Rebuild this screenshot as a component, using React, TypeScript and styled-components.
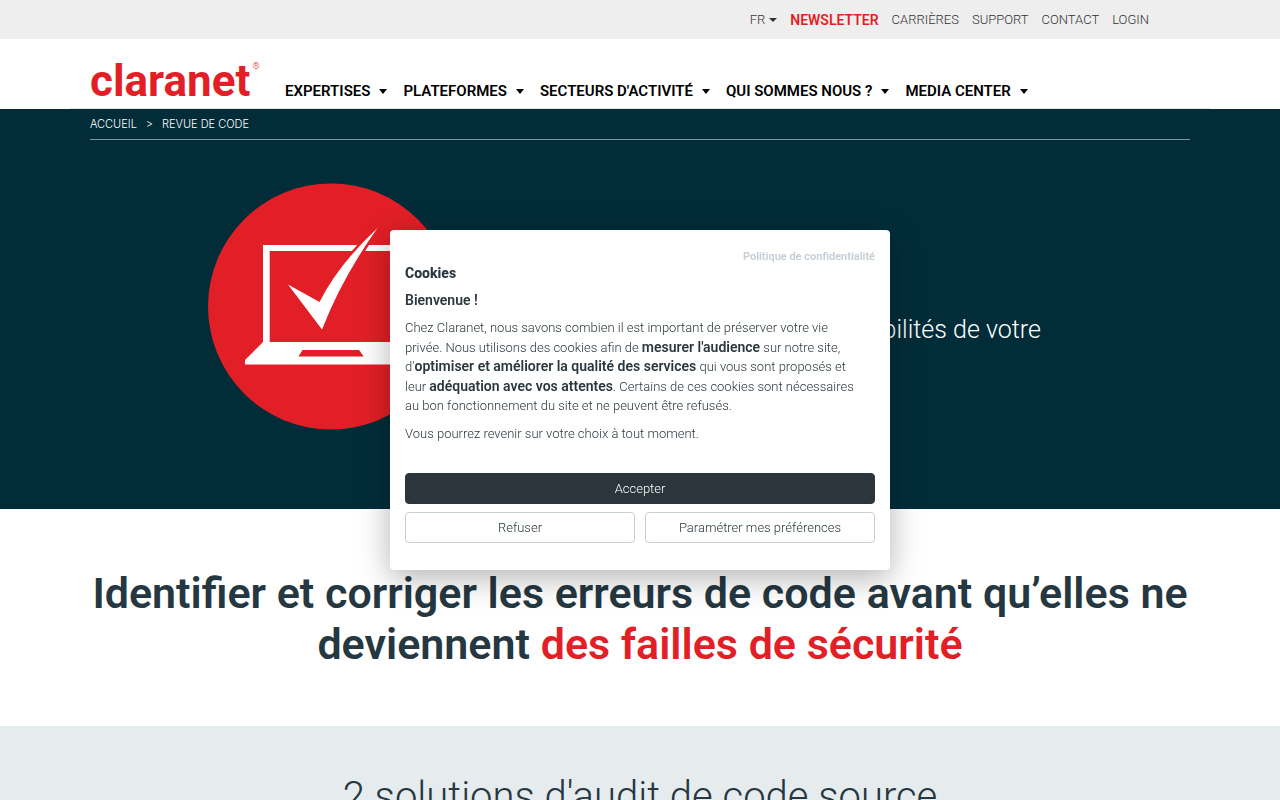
import React from "react";
import styled, { createGlobalStyle } from "styled-components";

const ink = "#253741";
const red = "#e21f26";
const night = "#022d38";

const GlobalStyle = createGlobalStyle`
  *, *::before, *::after { box-sizing: border-box; }
  body {
    margin: 0;
    background: #fff;
    color: ${ink};
    font-family: Roboto, "Liberation Sans", sans-serif;
    font-weight: 300;
  }
  h1, h2, p, ul, ol { margin: 0; padding: 0; }
  ul, ol { list-style: none; }
  a { color: inherit; text-decoration: none; }
`;

const Page = styled.div`
  height: 100vh;
  overflow: hidden;
`;

const Container = styled.div`
  width: 100%;
  max-width: 1100px;
  margin: 0 auto;
`;

const TopBar = styled.div`
  background: #eee;
`;

const TopNav = styled(Container)`
  display: flex;
  justify-content: flex-end;
  padding-right: 41px;
`;

const TopLinks = styled.ul`
  display: flex;
  gap: 13px;
  height: 39px;
  align-items: center;
  font-size: 13px;
  line-height: 20px;
  color: #333;
`;

const TopLink = styled.a<{ $highlight?: boolean }>`
  display: flex;
  align-items: center;
  gap: 4px;
  ${(p) => p.$highlight && `color: ${red}; font-weight: 600; font-size: 14px;`}
`;

const Caret = styled.span`
  border: 4px solid transparent;
  border-top-color: currentColor;
  border-bottom: 0;
`;

const MenuCaret = styled(Caret)`
  border-top-width: 5px;
`;

const HeaderRow = styled.header`
  display: flex;
  align-items: flex-end;
  gap: 26px;
  width: 100%;
  max-width: 1140px;
  height: 70px;
  margin: 0 auto;
  padding: 0 20px;
  border-bottom: 1px solid #dfe6e8;
`;

const Logo = styled.a`
  display: flex;
  align-items: flex-start;
  gap: 2px;
  width: 169px;
  height: 52px;
  color: ${red};
  font-size: 44px;
  font-weight: 700;
  line-height: 50px;
`;

const Registered = styled.sup`
  margin-top: 4px;
  font-size: 9px;
  font-weight: 300;
  line-height: 12px;
`;

const MainNav = styled.ul`
  display: flex;
  gap: 16px;
  padding-bottom: 7px;
  color: #000;
  font-size: 15px;
  font-weight: 600;
  line-height: 20px;
`;

const MainLink = styled.a`
  display: flex;
  align-items: center;
  gap: 9px;
  white-space: nowrap;
`;

const Hero = styled.section`
  min-height: 400px;
  background: ${night};
  color: #fff;
`;

const Breadcrumb = styled.ol`
  display: flex;
  gap: 9px;
  height: 31px;
  align-items: center;
  border-bottom: 1px solid #7b9298;
  font-family: Inter, "Liberation Sans", sans-serif;
  font-size: 11px;
  line-height: 16px;
`;

const HeroRow = styled.div`
  display: flex;
  align-items: center;
  justify-content: space-between;
  padding: 42px 149px 0 117px;
`;

const HeroText = styled.p`
  width: 430px;
  text-align: right;
  font-size: 25px;
  line-height: 40px;
  padding-top: 48px;
`;

const Statement = styled.section`
  padding: 59px 0 56px;
`;

const StatementTitle = styled.h1`
  font-size: 43px;
  font-weight: 600;
  line-height: 51px;
  text-align: center;
`;

const Accent = styled.span`
  color: ${red};
`;

const Solutions = styled.section`
  min-height: 400px;
  padding-top: 46px;
  background: #e6ebee;
`;

const SolutionsTitle = styled.h2`
  font-size: 40px;
  font-weight: 300;
  line-height: 50px;
  text-align: center;
`;

const Overlay = styled.div`
  position: fixed;
  inset: 0;
  display: grid;
  place-items: center;
`;

const Dialog = styled.div`
  width: 500px;
  max-width: 100%;
  padding: 20px 15px 27px;
  border-radius: 4px;
  background: #fff;
  color: #2b373e;
  box-shadow: 0 8px 32px rgba(0, 0, 0, 0.3);
  font-size: 13px;
`;

const PolicyLine = styled.div`
  display: flex;
  justify-content: flex-end;
  color: #c5cdd5;
  font-size: 11px;
  font-weight: 600;
  line-height: 14px;
`;

const DialogText = styled.div`
  display: grid;
  gap: 8px;
  padding-right: 12px;
  line-height: 1.5;
`;

const DialogTitle = styled.h2`
  font-size: 14px;
  font-weight: 800;
  line-height: 19px;
`;

const Strong = styled.strong`
  font-size: 14px;
  font-weight: 600;
  line-height: 1;
`;

const Actions = styled.div`
  display: grid;
  grid-template-columns: 1fr 1fr;
  gap: 8px 10px;
  margin-top: 30px;
`;

const Button = styled.button<{ $primary?: boolean }>`
  height: 31px;
  padding: 0 12px;
  border: 1px solid ${(p) => (p.$primary ? "#2b353b" : "#c8d0d6")};
  border-radius: 4px;
  background: ${(p) => (p.$primary ? "#2b353b" : "#fff")};
  color: ${(p) => (p.$primary ? "#fff" : "#2b373e")};
  font: inherit;
  ${(p) => p.$primary && "grid-column: 1 / -1;"}
`;

const sections = ["Expertises", "Plateformes", "Secteurs d'activité", "Qui sommes nous ?", "Media center"];

function LaptopCheck() {
  return (
    <svg width="248" height="248" viewBox="207 182 248 248" aria-hidden="true">
      <circle cx="331" cy="306.5" r="123" fill={red} />
      <path
        fill="#fff"
        fillRule="evenodd"
        d="M263 245H399V342L417 360V364.500H245V360L263 342ZM269.700 251V342H392.300V251ZM302.500 350L298.500 356.500H363.700L359 350Z"
      />
      <path
        d="M288 284.500L319.500 302Q338 265 377.500 228Q342 278 322 329.500Z"
        fill="#fff"
        stroke={red}
        strokeWidth="5"
        paintOrder="stroke"
      />
    </svg>
  );
}

export default function App() {
  return (
    <>
      <GlobalStyle />
      <Page>
        <TopBar>
          <TopNav as="nav">
            <TopLinks>
              <li><TopLink href="#fr">FR <Caret /></TopLink></li>
              <li><TopLink href="#newsletter" $highlight>NEWSLETTER</TopLink></li>
              <li><TopLink href="#carrieres">CARRIÈRES</TopLink></li>
              <li><TopLink href="#support">SUPPORT</TopLink></li>
              <li><TopLink href="#contact">CONTACT</TopLink></li>
              <li><TopLink href="#login">LOGIN</TopLink></li>
            </TopLinks>
          </TopNav>
        </TopBar>
        <HeaderRow>
          <Logo href="#accueil">claranet<Registered>®</Registered></Logo>
          <nav>
            <MainNav>
              {sections.map((s) => (
                <li key={s}><MainLink href="#menu">{s.toUpperCase()} <MenuCaret /></MainLink></li>
              ))}
            </MainNav>
          </nav>
        </HeaderRow>
        <main>
          <Hero>
            <Container>
              <Breadcrumb>
                <li><a href="#accueil">ACCUEIL</a></li>
                <li>&gt;</li>
                <li>REVUE DE CODE</li>
              </Breadcrumb>
              <HeroRow>
                <LaptopCheck />
                <HeroText>Identifiez les vulnérabilités de votre</HeroText>
              </HeroRow>
            </Container>
          </Hero>
          <Statement>
            <Container>
              <StatementTitle>
                Identifier et corriger les erreurs de code avant qu’elles ne deviennent{" "}
                <Accent>des failles de sécurité</Accent>
              </StatementTitle>
            </Container>
          </Statement>
          <Solutions>
            <SolutionsTitle>2 solutions d'audit de code source</SolutionsTitle>
          </Solutions>
        </main>
      </Page>
      <Overlay>
        <Dialog role="dialog" aria-labelledby="cookies-title">
          <PolicyLine><a href="#confidentialite">Politique de confidentialité</a></PolicyLine>
          <DialogText>
            <DialogTitle id="cookies-title">Cookies</DialogTitle>
            <p><Strong>Bienvenue !</Strong></p>
            <p>
              Chez Claranet, nous savons combien il est important de préserver votre vie privée. Nous
              utilisons des cookies afin de <Strong>mesurer l'audience</Strong> sur notre site,
              d'<Strong>optimiser et améliorer la qualité des services</Strong> qui vous sont proposés
              et leur <Strong>adéquation avec vos attentes</Strong>. Certains de ces cookies sont
              nécessaires au bon fonctionnement du site et ne peuvent être refusés.
            </p>
            <p>Vous pourrez revenir sur votre choix à tout moment.</p>
          </DialogText>
          <Actions>
            <Button type="button" $primary>Accepter</Button>
            <Button type="button">Refuser</Button>
            <Button type="button">Paramétrer mes préférences</Button>
          </Actions>
        </Dialog>
      </Overlay>
    </>
  );
}
